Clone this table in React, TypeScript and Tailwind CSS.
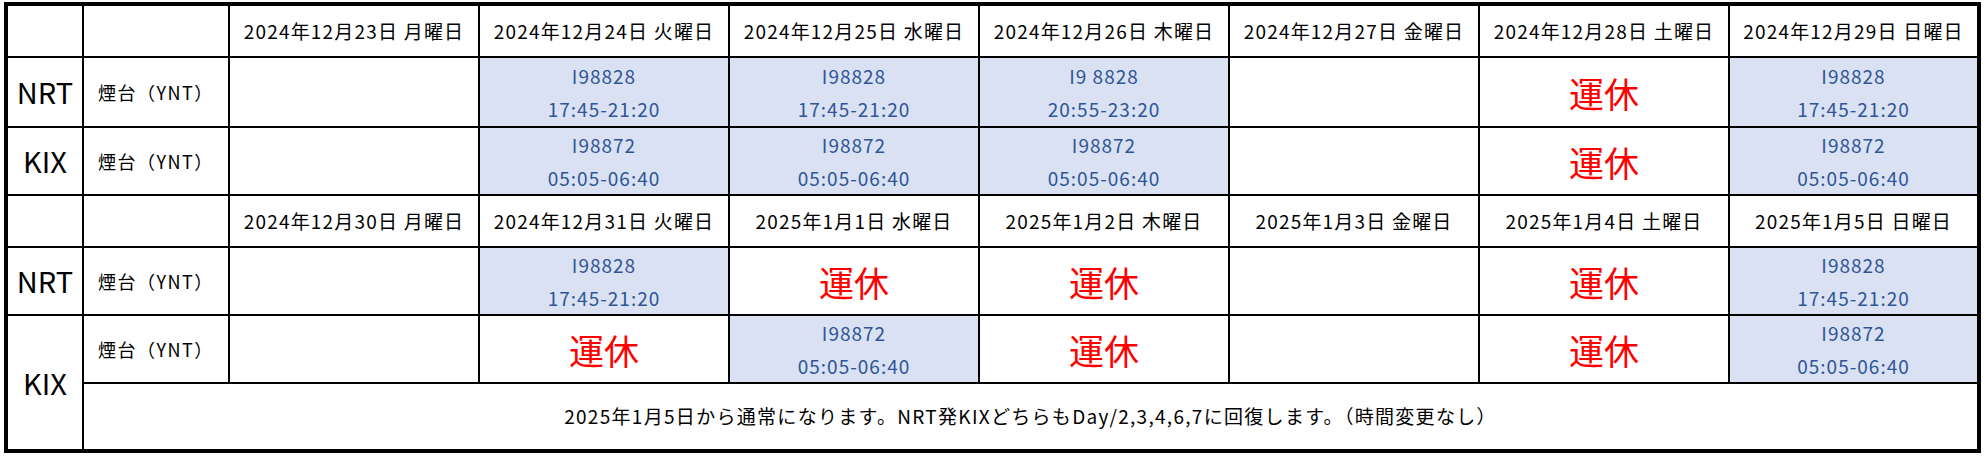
// Schedule grid: two weekly blocks of NRT / KIX flights (spreadsheet style)

type Cell = { kind: 'empty' } | { kind: 'flight'; no: string; time: string } | { kind: 'off' };

const E: Cell = { kind: 'empty' };
const OFF: Cell = { kind: 'off' };
const nrt = (no = 'I98828', time = '17:45-21:20'): Cell => ({ kind: 'flight', no, time });
const kix = (): Cell => ({ kind: 'flight', no: 'I98872', time: '05:05-06:40' });

const week1 = ['2024年12月23日 月曜日', '2024年12月24日 火曜日', '2024年12月25日 水曜日', '2024年12月26日 木曜日', '2024年12月27日 金曜日', '2024年12月28日 土曜日', '2024年12月29日 日曜日'];
const week2 = ['2024年12月30日 月曜日', '2024年12月31日 火曜日', '2025年1月1日 水曜日', '2025年1月2日 木曜日', '2025年1月3日 金曜日', '2025年1月4日 土曜日', '2025年1月5日 日曜日'];

const week1Nrt: Cell[] = [E, nrt(), nrt(), nrt('I9 8828', '20:55-23:20'), E, OFF, nrt()];
const week1Kix: Cell[] = [E, kix(), kix(), kix(), E, OFF, kix()];
const week2Nrt: Cell[] = [E, nrt(), OFF, OFF, E, OFF, nrt()];
const week2Kix: Cell[] = [E, OFF, kix(), OFF, E, OFF, kix()];

const font = { fontFamily: '"Noto Sans CJK JP", "Noto Sans", sans-serif' };

function DayCell({ cell }: { cell: Cell }) {
  if (cell.kind === 'flight') {
    return (
      <div className="bg-[#d9e1f2] flex flex-col items-center justify-center text-[#2f5597] text-[19px] leading-[33px] tracking-[1px]">
        <span>{cell.no}</span>
        <span>{cell.time}</span>
      </div>
    );
  }
  if (cell.kind === 'off') {
    return (
      <div className="bg-white flex items-center justify-center text-[#ff0000] text-[35px] leading-none">
        運休
      </div>
    );
  }
  return <div className="bg-white" />;
}

function HeaderRow({ days }: { days: string[] }) {
  return (
    <>
      <div className="bg-white" />
      <div className="bg-white" />
      {days.map((d) => (
        <div key={d} className="bg-white flex items-center justify-center text-[19px] tracking-[1.2px] text-black">
          {d}
        </div>
      ))}
    </>
  );
}

function City({ code, span }: { code: string; span?: boolean }) {
  return (
    <div className={`bg-white flex items-center justify-center text-[29px] text-black ${span ? 'row-span-2' : ''}`}>
      {code}
    </div>
  );
}

function Origin() {
  return <div className="bg-white flex items-center pl-[14px] text-[18px] tracking-[1.5px] text-black">煙台（YNT）</div>;
}

export default function App() {
  return (
    <div className="min-h-screen bg-white pt-[2px] pl-[4px]" style={font}>
      <div className="grid w-fit bg-black p-[4px] gap-[2px] grid-cols-[74px_144px_248px_248px_248px_248px_248px_248px_247px] grid-rows-[50px_68px_66px_50px_66px_66px_65px]">
        <HeaderRow days={week1} />

        <City code="NRT" />
        <Origin />
        {week1Nrt.map((c, i) => <DayCell key={'a' + i} cell={c} />)}

        <City code="KIX" />
        <Origin />
        {week1Kix.map((c, i) => <DayCell key={'b' + i} cell={c} />)}

        <HeaderRow days={week2} />

        <City code="NRT" />
        <Origin />
        {week2Nrt.map((c, i) => <DayCell key={'c' + i} cell={c} />)}

        <City code="KIX" span />
        <Origin />
        {week2Kix.map((c, i) => <DayCell key={'d' + i} cell={c} />)}

        {/* note row under the last KIX line */}
        <div className="col-span-8 bg-white flex items-center justify-center text-[19px] tracking-[1.3px] text-black">
          2025年1月5日から通常になります。NRT発KIXどちらもDay/2,3,4,6,7に回復します。（時間変更なし）
        </div>
      </div>
    </div>
  );
}
